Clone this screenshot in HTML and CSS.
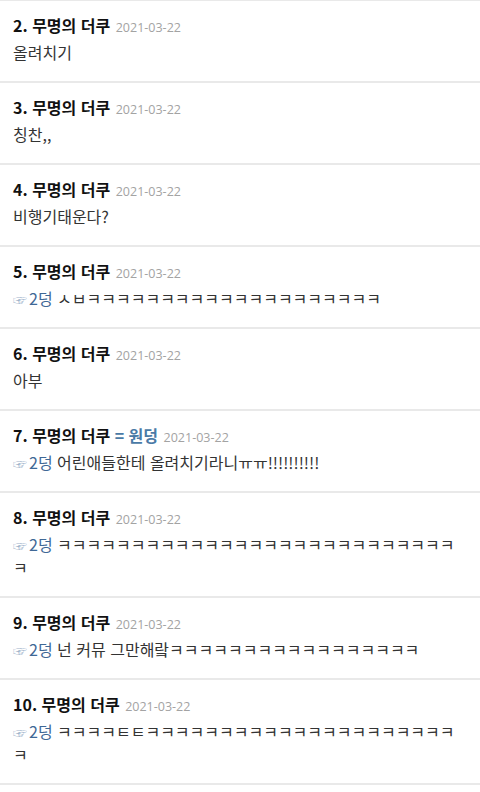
FILE: index.html
```html
<!DOCTYPE html>
<html lang="ko">
<head>
  <meta charset="UTF-8" />
  <meta name="viewport" content="width=480, initial-scale=1.0">
  <title>댓글</title>
  <link rel="stylesheet" href="styles.css">
</head>
<body>
  <ul class="comments">
    <li class="comment">
      <div class="head"><span class="name">2. 무명의 더쿠</span> <span class="date">2021-03-22</span></div>
      <p class="text">올려치기</p>
    </li>
    <li class="comment">
      <div class="head"><span class="name">3. 무명의 더쿠</span> <span class="date">2021-03-22</span></div>
      <p class="text">칭찬,,</p>
    </li>
    <li class="comment">
      <div class="head"><span class="name">4. 무명의 더쿠</span> <span class="date">2021-03-22</span></div>
      <p class="text">비행기태운다?</p>
    </li>
    <li class="comment">
      <div class="head"><span class="name">5. 무명의 더쿠</span> <span class="date">2021-03-22</span></div>
      <p class="text"><span class="reply"><span class="hand">☞</span>2덩</span> ㅅㅂㅋㅋㅋㅋㅋㅋㅋㅋㅋㅋㅋㅋㅋㅋㅋㅋㅋㅋㅋㅋ</p>
    </li>
    <li class="comment">
      <div class="head"><span class="name">6. 무명의 더쿠</span> <span class="date">2021-03-22</span></div>
      <p class="text">아부</p>
    </li>
    <li class="comment">
      <div class="head"><span class="name">7. 무명의 더쿠</span> <span class="op">= 원덩</span> <span class="date">2021-03-22</span></div>
      <p class="text"><span class="reply"><span class="hand">☞</span>2덩</span> 어린애들한테 올려치기라니ㅠㅠ!!!!!!!!!!</p>
    </li>
    <li class="comment">
      <div class="head"><span class="name">8. 무명의 더쿠</span> <span class="date">2021-03-22</span></div>
      <p class="text"><span class="reply"><span class="hand">☞</span>2덩</span> ㅋㅋㅋㅋㅋㅋㅋㅋㅋㅋㅋㅋㅋㅋㅋㅋㅋㅋㅋㅋㅋㅋㅋㅋㅋㅋㅋㅋ</p>
    </li>
    <li class="comment">
      <div class="head"><span class="name">9. 무명의 더쿠</span> <span class="date">2021-03-22</span></div>
      <p class="text"><span class="reply"><span class="hand">☞</span>2덩</span> 넌 커뮤 그만해랔ㅋㅋㅋㅋㅋㅋㅋㅋㅋㅋㅋㅋㅋㅋㅋㅋㅋ</p>
    </li>
    <li class="comment">
      <div class="head"><span class="name">10. 무명의 더쿠</span> <span class="date">2021-03-22</span></div>
      <p class="text"><span class="reply"><span class="hand">☞</span>2덩</span> ㅋㅋㅋㅋㅌㅌㅋㅋㅋㅋㅋㅋㅋㅋㅋㅋㅋㅋㅋㅋㅋㅋㅋㅋㅋㅋㅋㅋ</p>
    </li>
  </ul>
</body>
</html>
```

FILE: styles.css
```css
* {
  box-sizing: border-box;
}

body {
  margin: 0;
  background-color: #ffffff;
  color: #333333;
  font-family: "Noto Sans CJK KR", "Noto Sans", sans-serif;
}

.comments {
  list-style: none;
  margin: 0;
  padding: 0;
  border-top: 1px solid #e9e9e9;
}

.comment {
  padding: 12px 13px 17px;
  border-bottom: 2px solid #e9e9e9;
}

.head {
  height: 24px;
  font-size: 16px;
  line-height: 24px;
  white-space: nowrap;
}

.name {
  font-weight: bold;
  color: #111111;
}

.op {
  font-weight: bold;
  color: #4a7aa6;
}

.date {
  margin-left: 1px;
  font-family: "Open Sans", "Noto Sans", sans-serif;
  font-size: 12.5px;
  line-height: 1;
  color: #a3a3a3;
}

.text {
  margin: 4px 0 0;
  font-size: 16px;
  line-height: 23px;
  color: #333333;
  word-break: break-all;
}

.reply {
  color: #3f6896;
}

.hand {
  margin-right: 2px;
  font-size: 14px;
  line-height: 1;
  color: #9fb4cc;
}
```
